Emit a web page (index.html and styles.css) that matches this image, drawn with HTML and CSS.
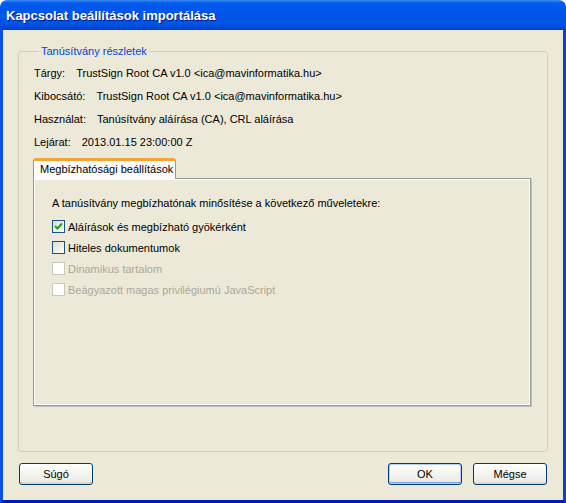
FILE: index.html
```html
<!DOCTYPE html>
<html lang="hu">

<head>
    <meta charset="UTF-8">
    <title>Kapcsolat beállítások importálása</title>
    <link rel="stylesheet" href="styles.css">
</head>

<body>
    <div class="window">
        <div class="titlebar">Kapcsolat beállítások importálása</div>

        <div class="client">
            <fieldset class="group">
                <legend>Tanúsítvány részletek</legend>

                <div class="row"><span class="label">Tárgy:</span>TrustSign Root CA v1.0 &lt;ica@mavinformatika.hu&gt;</div>
                <div class="row"><span class="label">Kibocsátó:</span>TrustSign Root CA v1.0 &lt;ica@mavinformatika.hu&gt;</div>
                <div class="row"><span class="label">Használat:</span>Tanúsítvány aláírása (CA), CRL aláírása</div>
                <div class="row"><span class="label">Lejárat:</span>2013.01.15 23:00:00 Z</div>

                <div class="tabs">
                    <div class="tab-strip">
                        <div class="tab active">Megbízhatósági beállítások</div>
                    </div>
                    <div class="tab-panel">
                        <p class="intro">A tanúsítvány megbízhatónak minősítése a következő műveletekre:</p>

                        <div class="check">
                            <span class="box checked">
                                <svg width="11" height="11" viewBox="0 0 11 11">
                                    <polyline points="2,5 4.5,7.5 9,2.5" fill="none" stroke="#21a121" stroke-width="2"/>
                                </svg>
                            </span>
                            Aláírások és megbízható gyökérként
                        </div>
                        <div class="check">
                            <span class="box"></span>
                            Hiteles dokumentumok
                        </div>
                        <div class="check disabled">
                            <span class="box"></span>
                            Dinamikus tartalom
                        </div>
                        <div class="check disabled">
                            <span class="box"></span>
                            Beágyazott magas privilégiumú JavaScript
                        </div>
                    </div>
                </div>
            </fieldset>

            <div class="buttons">
                <button class="btn">Súgó</button>
                <div class="spacer"></div>
                <button class="btn default">OK</button>
                <button class="btn">Mégse</button>
            </div>
        </div>
    </div>
</body>

</html>
```

FILE: styles.css
```css
body {
    margin: 0;
    padding: 0;
    background-color: #fff;
    font-family: 'Liberation Sans', Arial, sans-serif;
    font-size: 11px;
    color: #000;
}

.window {
    width: 566px;
    height: 503px;
    display: flex;
    flex-direction: column;
}

.titlebar {
    height: 30px;
    box-sizing: border-box;
    padding: 0 0 0 6px;
    line-height: 31px;
    border-radius: 7px 7px 0 0;
    background: linear-gradient(to bottom, #3c8cf6 0%, #0a62ea 8%, #0058ee 18%, #0055e8 50%, #0054e3 80%, #0048d8 92%, #003fc9 100%);
    color: #fff;
    font-weight: bold;
    font-size: 13px;
    text-shadow: 1px 1px 0 #0a1883;
}

.client {
    flex: 1;
    display: flex;
    flex-direction: column;
    background-color: #ece9d8;
    border-left: 3px solid #0a4fdf;
    border-right: 3px solid #0a3fd4;
    border-bottom: 3px solid #0019b8;
    padding: 14px 15px 15px 15px;
}

.group {
    flex: 1;
    margin: 0 0 11px 0;
    padding: 4px 16px 0 14px;
    border: 1px solid #d0d0bf;
    border-radius: 3px;
    min-width: 0;
}

.group legend {
    margin-left: 6px;
    padding: 0 2px;
    color: #0046d5;
    line-height: 14px;
}

.row {
    padding-left: 1px;
    line-height: 23px;
}

.label {
    margin-right: 11px;
}

.tabs {
    margin-top: 4px;
}

.tab-strip {
    display: flex;
    height: 20px;
}

.tab {
    position: relative;
    z-index: 1;
    padding: 0 6px;
    width: 129px;
    height: 18px;
    line-height: 17px;
    white-space: nowrap;
    border: 1px solid #919b9c;
    border-top: 3px solid #f5a436;
    border-bottom: none;
    border-radius: 3px 3px 0 0;
    background-color: #fcfcfe;
}

.tab-panel {
    height: 226px;
    border: 1px solid #919b9c;
    box-shadow: inset 1px 1px 0 #fff, inset -1px -1px 0 #fff, 1px 1px 0 #c3c3bd;
    background-color: #ece9d8;
    padding: 0 18px;
}

.intro {
    margin: 17px 0 6px 0;
    line-height: 14px;
}

.check {
    display: flex;
    align-items: center;
    height: 21px;
}

.box {
    width: 11px;
    height: 11px;
    border: 1px solid #1c5180;
    background: linear-gradient(135deg, #dcdcd7 0%, #f0f0ea 60%, #fff 100%);
    margin-right: 3px;
    display: flex;
}

.check.disabled {
    color: #aca899;
}

.check.disabled .box {
    border-color: #cac8bb;
    background: #fff;
}

.buttons {
    display: flex;
    gap: 11px;
    padding-left: 1px;
    padding-right: 1px;
}

.spacer {
    flex: 1;
}

.btn {
    width: 74px;
    height: 22px;
    padding: 0;
    border: 1px solid #003c74;
    border-radius: 3px;
    background: linear-gradient(to bottom, #fff 0%, #f6f6f2 40%, #ecebe6 85%, #d6d0c5 100%);
    font-family: 'Liberation Sans', Arial, sans-serif;
    font-size: 11px;
    color: #000;
}

.btn.default {
    box-shadow: inset 0 0 0 1px #b3cff7, inset 0 -1px 0 1px #7fa4e6;
}
```
